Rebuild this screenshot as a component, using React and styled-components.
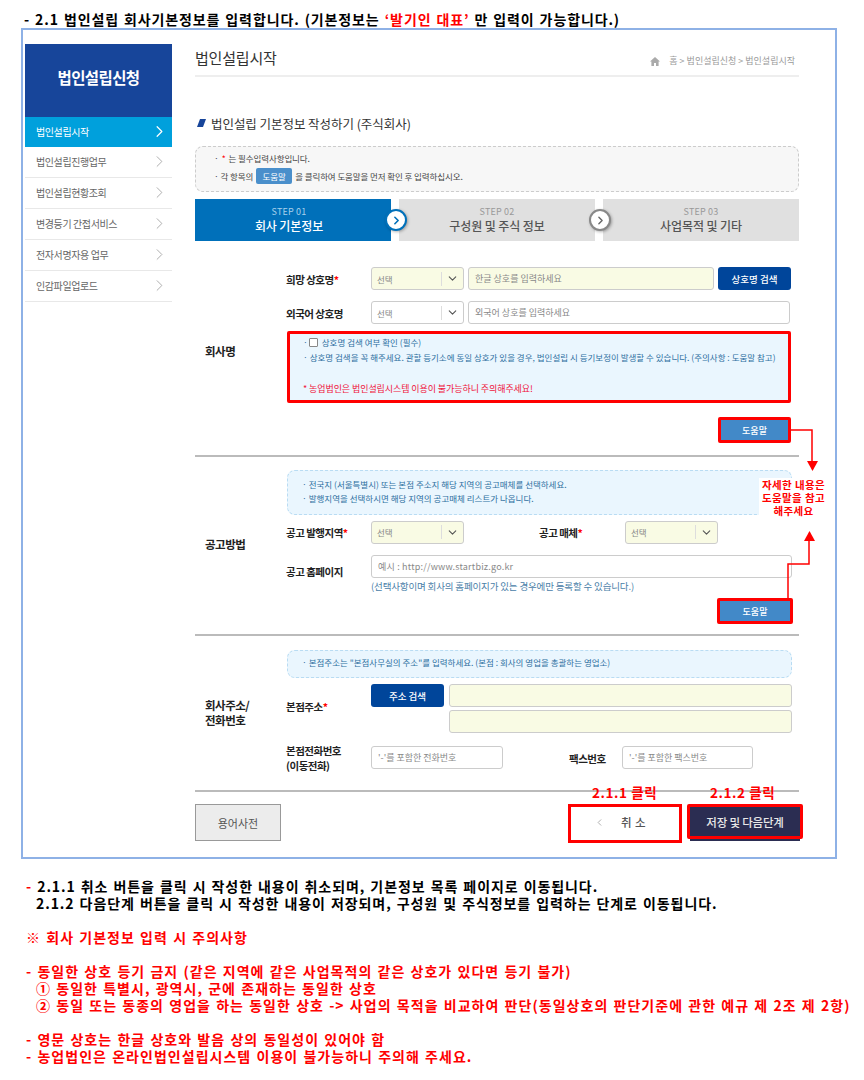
import styled, { createGlobalStyle } from 'styled-components'
import { ChevronRight, ChevronDown, ChevronLeft } from 'lucide-react'

const FONT = '"Noto Sans CJK KR", "Noto Sans", sans-serif'

const GlobalStyle = createGlobalStyle`
  html, body {
    margin: 0;
    background: #fff;
    font-family: ${FONT};
  }
  * { box-sizing: border-box; }
`

const Page = styled.div`
  position: relative;
  width: 864px;
  height: 1080px;
  overflow: hidden;
  background: #fff;
`

const Heading = styled.h1`
  margin: 0;
  height: 28px;
  padding: 11px 0 0 24px;
  font-size: 14px;
  line-height: 17px;
  font-weight: 700;
  color: #000;
  white-space: nowrap;
  letter-spacing: 0.88px;
  word-spacing: 1px;
`

const Red = styled.span`
  color: #f00;
`

const Card = styled.div`
  display: flex;
  gap: 23px;
  margin-left: 21px;
  width: 816px;
  height: 831px;
  padding: 14px 0 0 2px;
  border: 2px solid #8eb1e6;
`

// sidebar
const Side = styled.aside`
  width: 147px;
  flex: none;
`

const SideHead = styled.div`
  display: flex;
  align-items: center;
  justify-content: center;
  height: 73px;
  padding-bottom: 7px;
  background: #17459a;
  color: #fff;
  font-size: 15.5px;
  font-weight: 700;
  letter-spacing: -0.6px;
`

const SideItem = styled.div`
  display: flex;
  align-items: center;
  justify-content: space-between;
  height: ${(p) => (p.$active ? '30px' : '31px')};
  padding: 0 3px 1px 11px;
  font-size: 10px;
  letter-spacing: -0.4px;
  background: ${(p) => (p.$active ? '#00a0dc' : '#fff')};
  color: ${(p) => (p.$active ? '#fff' : '#666')};
  border-bottom: ${(p) => (p.$active ? 'none' : '1px solid #e8e8e8')};
  svg { color: ${(p) => (p.$active ? '#fff' : '#aaa')}; }
`

// main column
const Main = styled.main`
  width: 604px;
  flex: none;
`

const TitleBar = styled.div`
  display: flex;
  align-items: flex-start;
  justify-content: space-between;
  height: 33px;
  border-bottom: 2px solid #eee;
`

const PageTitle = styled.h2`
  margin: 0;
  font-size: 15px;
  line-height: 28px;
  font-weight: 400;
  color: #333;
  letter-spacing: -0.2px;
`

const Crumbs = styled.div`
  display: flex;
  align-items: center;
  gap: 3px;
  margin: 11px 4px 0 0;
  font-size: 9px;
  line-height: 12px;
  color: #999;
  svg { margin-right: 6px; }
`

const FormTitle = styled.h3`
  display: flex;
  align-items: center;
  gap: 5px;
  margin: 36px 0 0;
  height: 20px;
  padding-left: 2px;
  font-size: 12.5px;
  font-weight: 400;
  color: #333;
  letter-spacing: -0.05px;
`

const Notice = styled.div`
  margin-top: 13px;
  height: 46px;
  padding: 5px 0 0 18px;
  background: #f7f7f7;
  border: 1px dashed #ccc;
  border-radius: 8px;
  font-size: 8.5px;
  line-height: 12px;
  color: #444;
  letter-spacing: -0.1px;
`

const NoticeRow = styled.div`
  display: flex;
  align-items: center;
  gap: 3px;
  height: ${(p) => p.$h || 12}px;
`

const Pill = styled.span`
  display: inline-flex;
  align-items: center;
  justify-content: center;
  width: 36px;
  height: 16px;
  border-radius: 2px;
  background: #4a8fcb;
  color: #fff;
`

const Steps = styled.div`
  display: flex;
  gap: 8px;
  margin-top: 7px;
`

const Step = styled.div`
  position: relative;
  flex: none;
  width: 196px;
  height: 42px;
  display: flex;
  flex-direction: column;
  align-items: center;
  justify-content: center;
  padding-right: ${(p) => (p.$active ? '8px' : '0')};
  background: ${(p) => (p.$active ? '#0070ba' : '#e0e0e0')};
  color: ${(p) => (p.$active ? '#fff' : '#555')};
`

const StepNum = styled.div`
  font-size: 9px;
  line-height: 12px;
  letter-spacing: 0.2px;
  color: ${(p) => (p.$active ? '#a8d0ec' : '#999')};
`

const StepName = styled.div`
  font-size: 12px;
  line-height: 16px;
  font-weight: 500;
  letter-spacing: -0.1px;
`

const StepArrow = styled.span`
  position: absolute;
  top: 10px;
  right: -16px;
  z-index: 1;
  display: flex;
  align-items: center;
  justify-content: center;
  width: 22px;
  height: 22px;
  border-radius: 50%;
  background: #fff;
  border: 2px solid ${(p) => (p.$active ? '#0070ba' : '#888')};
  color: ${(p) => (p.$active ? '#0070ba' : '#666')};
  box-shadow: 1px 1px 3px rgba(0, 0, 0, 0.3);
`

// form sections
const Section = styled.section`
  display: flex;
  align-items: center;
  margin-top: ${(p) => p.$mt || 0}px;
  height: ${(p) => p.$h}px;
  border-bottom: 2px solid #bbb;
`

const SectionLabel = styled.div`
  flex: none;
  width: 92px;
  padding: ${(p) => p.$pt || 0}px 0 2px 10px;
  font-size: 11.5px;
  line-height: 15px;
  font-weight: 700;
  color: #222;
  letter-spacing: -0.5px;
`

const SectionBody = styled.div`
  align-self: flex-start;
  width: 504px;
  padding-top: ${(p) => p.$pt}px;
`

const Row = styled.div`
  display: flex;
  align-items: ${(p) => p.$align || 'center'};
  gap: 4px;
  height: ${(p) => p.$h || 23}px;
  margin-top: ${(p) => p.$mt || 0}px;
`

const FieldLabel = styled.label`
  flex: none;
  width: ${(p) => p.$w || 81}px;
  margin-left: ${(p) => p.$ml ?? -1}px;
  padding-top: ${(p) => p.$pt || 1}px;
  font-size: 10.5px;
  line-height: 15px;
  font-weight: 700;
  color: #222;
  letter-spacing: -0.5px;
  white-space: nowrap;
  em {
    font-style: normal;
    color: #f00;
  }
`

const Select = styled.div`
  flex: none;
  display: flex;
  align-items: center;
  width: 93px;
  height: 23px;
  padding-left: 5px;
  border: 1px solid #ccc;
  border-radius: 3px;
  background: ${(p) => (p.$req ? '#f9fbe4' : '#fff')};
  font-size: 8.5px;
  color: #888;
  span {
    flex: 1;
  }
  i {
    display: flex;
    align-items: center;
    justify-content: center;
    width: 22px;
    height: 14px;
    border-left: 1px solid #ddd;
    color: #555;
  }
`

const Field = styled.div`
  flex: ${(p) => (p.$w ? 'none' : '1')};
  width: ${(p) => (p.$w ? `${p.$w}px` : 'auto')};
  height: 23px;
  padding: 0 6px;
  margin-right: ${(p) => p.$mr || 0}px;
  display: flex;
  align-items: center;
  border: 1px solid #ccc;
  border-radius: 3px;
  background: ${(p) => (p.$req ? '#f9fbe4' : '#fff')};
  font-size: 9px;
  color: #888;
`

const UrlValue = styled.span`
  letter-spacing: 0.2px;
`

const NavyButton = styled.button`
  flex: none;
  width: ${(p) => p.$w || 73}px;
  height: 23px;
  padding: 0;
  border: none;
  border-radius: 3px;
  background: #00459a;
  color: #fff;
  font-family: inherit;
  font-size: 9.5px;
  font-weight: 500;
`

const InfoBox = styled.div`
  width: ${(p) => p.$w || 505}px;
  height: ${(p) => p.$h}px;
  margin-top: ${(p) => p.$mt || 0}px;
  padding: ${(p) => p.$p || '6px 0 0 14px'};
  background: #eaf6fe;
  border: 1px dashed #b9dcf3;
  border-radius: 8px;
  font-size: 8.5px;
  line-height: 14px;
  color: #2d6f9f;
  white-space: nowrap;
`

const MarkedBox = styled(InfoBox)`
  border: 3px solid #f00;
  border-radius: 2px;
  padding: 1px 0 0 13px;
  line-height: 15px;
`

const CheckLine = styled.div`
  display: flex;
  align-items: center;
  gap: 1px;
  height: 15px;
`

const CheckBox = styled.span`
  width: 9px;
  height: 9px;
  margin-right: 3px;
  border: 1px solid #888;
  border-radius: 1px;
  background: #fff;
`

const BoxWarning = styled.div`
  margin-top: 16px;
  font-size: 9px;
  letter-spacing: -0.08px;
  color: #f0143c;
`

const HelpRow = styled.div`
  display: flex;
  justify-content: flex-end;
  margin-top: ${(p) => p.$mt}px;
  width: ${(p) => p.$w || 504}px;
`

const HelpButton = styled.button`
  width: ${(p) => p.$w || 73}px;
  height: 26px;
  padding: 0;
  border: 3px solid #f00;
  border-radius: 2px;
  background: #4289c8;
  color: #fff;
  font-family: inherit;
  font-size: 9px;
  font-weight: 500;
`

const FieldNote = styled.div`
  margin: 2px 0 0 84px;
  font-size: 9.5px;
  line-height: 12px;
  letter-spacing: -0.15px;
  color: #4a80a8;
  white-space: nowrap;
`

const AddressFields = styled.div`
  flex: 1;
  display: flex;
  flex-direction: column;
  gap: 3px;
  margin: 0 -1px 0 1px;
`

const AddressField = styled(Field)`
  flex: none;
`

// bottom of the form
const Actions = styled.div`
  position: relative;
  display: flex;
  align-items: flex-start;
  justify-content: space-between;
  margin-top: 12px;
`

const GlossaryButton = styled.button`
  width: 86px;
  height: 37px;
  padding: 0;
  border: 1px solid #999;
  background: #ececec;
  color: #555;
  font-family: inherit;
  font-size: 11px;
`

const ActionGroup = styled.div`
  display: flex;
  gap: 5px;
  margin-right: -4px;
`

const ActionCell = styled.div`
  position: relative;
`

const ClickTag = styled.span`
  position: absolute;
  top: -21px;
  left: ${(p) => p.$left}px;
  font-size: 13.5px;
  line-height: 18px;
  font-weight: 700;
  color: #f00;
  letter-spacing: 0.6px;
  white-space: nowrap;
`

const CancelButton = styled.button`
  display: flex;
  align-items: center;
  justify-content: center;
  gap: 16px;
  width: 114px;
  height: 39px;
  padding: 0 10px 3px 0;
  border: 3px solid #f00;
  background: #fff;
  color: #555;
  font-family: inherit;
  font-size: 11.5px;
  font-weight: 500;
  letter-spacing: 0.4px;
`

const SaveButton = styled.button`
  width: 116px;
  height: 35px;
  padding: 0;
  border: 3px solid #f00;
  border-radius: 2px;
  background: #2b2d52;
  box-shadow: 0 5px 0 -3px #2b2d52;
  color: #e8e8e8;
  font-family: inherit;
  font-size: 11.5px;
  font-weight: 500;
  letter-spacing: -0.2px;
`

// annotation over the screenshot
const Overlay = styled.svg`
  position: absolute;
  inset: 0;
  pointer-events: none;
`

const Callout = styled.div`
  position: absolute;
  left: 759px;
  top: 478px;
  width: 69px;
  height: 38px;
  background: #fff;
  color: #f00;
  font-size: 10.5px;
  line-height: 13px;
  font-weight: 700;
  letter-spacing: 0.4px;
  text-align: center;
  white-space: nowrap;
`

// text under the screenshot
const Notes = styled.div`
  margin-top: 19px;
  padding-left: 26px;
  font-size: 14px;
  line-height: 17px;
  font-weight: 700;
  white-space: nowrap;
`

const Line = styled.div`
  color: ${(p) => (p.$black ? '#000' : '#f00')};
  padding-left: ${(p) => p.$indent || 0}px;
  margin-top: ${(p) => p.$gap || 0}px;
  letter-spacing: ${(p) => (p.$black ? '0.92px' : '1.03px')};
  word-spacing: 1px;
`

const sideItems = ['법인설립진행업무', '법인설립현황조회', '변경등기 간접서비스', '전자서명자용 업무', '인감파일업로드']

const Chevron = () => <ChevronDown size={13} strokeWidth={2} />

const App = () => {
  return (
    <Page>
      <GlobalStyle />
      <Heading>
        - 2.1 법인설립 회사기본정보를 입력합니다. (기본정보는 <Red>‘발기인 대표’</Red> 만 입력이 가능합니다.)
      </Heading>
      <Card>
        <Side>
          <SideHead>법인설립신청</SideHead>
          <SideItem $active>
            법인설립시작
            <ChevronRight size={19} strokeWidth={1.5} />
          </SideItem>
          {sideItems.map((name) => (
            <SideItem key={name}>
              {name}
              <ChevronRight size={19} strokeWidth={1.2} />
            </SideItem>
          ))}
        </Side>
        <Main>
          <TitleBar>
            <PageTitle>법인설립시작</PageTitle>
            <Crumbs>
              <svg width="10" height="9" viewBox="0 0 10 9">
                <path d="M5 0 L10 4.6 H8.6 V9 H6 V6 H4 V9 H1.4 V4.6 H0 Z" fill="#aaa" />
              </svg>
              홈 &gt; 법인설립신청 &gt; 법인설립시작
            </Crumbs>
          </TitleBar>
          <FormTitle>
            <svg width="9" height="8" viewBox="0 0 9 8">
              <path d="M3 0 H9 L6 8 H0 Z" fill="#17459a" />
            </svg>
            법인설립 기본정보 작성하기 (주식회사)
          </FormTitle>
          <Notice>
            <NoticeRow>
              · <Red>*</Red>는 필수입력사항입니다.
            </NoticeRow>
            <NoticeRow $h={24}>
              · 각 항목의 <Pill>도움말</Pill> 을 클릭하여 도움말을 먼저 확인 후 입력하십시오.
            </NoticeRow>
          </Notice>
          <Steps>
            <Step $active>
              <StepNum $active>STEP 01</StepNum>
              <StepName>회사 기본정보</StepName>
              <StepArrow $active>
                <ChevronRight size={13} strokeWidth={3} />
              </StepArrow>
            </Step>
            <Step>
              <StepNum>STEP 02</StepNum>
              <StepName>구성원 및 주식 정보</StepName>
              <StepArrow>
                <ChevronRight size={13} strokeWidth={2.5} />
              </StepArrow>
            </Step>
            <Step>
              <StepNum>STEP 03</StepNum>
              <StepName>사업목적 및 기타</StepName>
            </Step>
          </Steps>

          <Section $mt={9} $h={207}>
            <SectionLabel>회사명</SectionLabel>
            <SectionBody $pt={17}>
              <Row>
                <FieldLabel>
                  희망 상호명<em>*</em>
                </FieldLabel>
                <Select $req>
                  <span>선택</span>
                  <i><Chevron /></i>
                </Select>
                <Field $req>한글 상호를 입력하세요</Field>
                <NavyButton>상호명 검색</NavyButton>
              </Row>
              <Row $mt={11}>
                <FieldLabel>외국어 상호명</FieldLabel>
                <Select>
                  <span>선택</span>
                  <i><Chevron /></i>
                </Select>
                <Field $mr={1}>외국어 상호를 입력하세요</Field>
              </Row>
              <MarkedBox $h={72} $mt={7} $w={504}>
                <CheckLine>
                  · <CheckBox /> 상호명 검색 여부 확인 (필수)
                </CheckLine>
                <div>· 상호명 검색을 꼭 해주세요. 관할 등기소에 동일 상호가 있을 경우, 법인설립 시 등기보정이 발생할 수 있습니다. (주의사항 : 도움말 참고)</div>
                <BoxWarning>* 농업법인은 법인설립시스템 이용이 불가능하니 주의해주세요!</BoxWarning>
              </MarkedBox>
              <HelpRow $mt={14}>
                <HelpButton>도움말</HelpButton>
              </HelpRow>
            </SectionBody>
          </Section>

          <Section $h={179}>
            <SectionLabel>공고방법</SectionLabel>
            <SectionBody $pt={13}>
              <InfoBox $h={45}>
                <div>· 전국지 (서울특별시) 또는 본점 주소지 해당 지역의 공고매체를 선택하세요.</div>
                <div>· 발행지역을 선택하시면 해당 지역의 공고매체 리스트가 나옵니다.</div>
              </InfoBox>
              <Row $mt={6} $h={22}>
                <FieldLabel>
                  공고 발행지역<em>*</em>
                </FieldLabel>
                <Select $req>
                  <span>선택</span>
                  <i><Chevron /></i>
                </Select>
                <FieldLabel $w={82} $ml={71}>
                  공고 매체<em>*</em>
                </FieldLabel>
                <Select $req>
                  <span>선택</span>
                  <i><Chevron /></i>
                </Select>
              </Row>
              <Row $mt={12}>
                <FieldLabel $pt={10}>공고 홈페이지</FieldLabel>
                <Field $mr={-1}><UrlValue>예시 : http://www.startbiz.go.kr</UrlValue></Field>
              </Row>
              <FieldNote>(선택사항이며 회사의 홈페이지가 있는 경우에만 등록할 수 있습니다.)</FieldNote>
              <HelpRow $mt={6} $w={506}>
                <HelpButton $w={76}>도움말</HelpButton>
              </HelpRow>
            </SectionBody>
          </Section>

          <Section $h={156}>
            <SectionLabel $pt={2}>
              회사주소/
              <br />
              전화번호
            </SectionLabel>
            <SectionBody $pt={14}>
              <InfoBox $h={28} $p="4px 0 0 14px">
                · 본점주소는 "본점사무실의 주소"를 입력하세요. (본점 : 회사의 영업을 총괄하는 영업소)
              </InfoBox>
              <Row $mt={6} $h={49} $align="flex-start">
                <FieldLabel $pt={15}>
                  본점주소<em>*</em>
                </FieldLabel>
                <NavyButton>주소 검색</NavyButton>
                <AddressFields>
                  <AddressField $req />
                  <AddressField $req />
                </AddressFields>
              </Row>
              <Row $mt={13}>
                <FieldLabel>
                  본점전화번호
                  <br />
                  (이동전화)
                </FieldLabel>
                <Field $w={132}>'-'를 포함한 전화번호</Field>
                <FieldLabel $w={49} $ml={62}>팩스번호</FieldLabel>
                <Field $w={131}>'-'를 포함한 팩스번호</Field>
              </Row>
            </SectionBody>
          </Section>

          <Actions>
            <GlossaryButton>용어사전</GlossaryButton>
            <ActionGroup>
              <ActionCell>
                <ClickTag $left={24}>2.1.1 클릭</ClickTag>
                <CancelButton>
                  <ChevronLeft size={11} strokeWidth={2} color="#aaa" />
                  취 소
                </CancelButton>
              </ActionCell>
              <ActionCell>
                <ClickTag $left={23}>2.1.2 클릭</ClickTag>
                <SaveButton>저장 및 다음단계</SaveButton>
              </ActionCell>
            </ActionGroup>
          </Actions>
        </Main>
      </Card>

      <Notes>
        <Line $black><Red>- </Red>2.1.1 취소 버튼을 클릭 시 작성한 내용이 취소되며, 기본정보 목록 페이지로 이동됩니다.</Line>
        <Line $black $indent={10}>2.1.2 다음단계 버튼을 클릭 시 작성한 내용이 저장되며, 구성원 및 주식정보를 입력하는 단계로 이동됩니다.</Line>
        <Line $gap={17}>※ 회사 기본정보 입력 시 주의사항</Line>
        <Line $gap={17}>- 동일한 상호 등기 금지 (같은 지역에 같은 사업목적의 같은 상호가 있다면 등기 불가)</Line>
        <Line $indent={10}>① 동일한 특별시, 광역시, 군에 존재하는 동일한 상호</Line>
        <Line $indent={10}>② 동일 또는 동종의 영업을 하는 동일한 상호 -&gt; 사업의 목적을 비교하여 판단(동일상호의 판단기준에 관한 예규 제 2조 제 2항)</Line>
        <Line $gap={17}>- 영문 상호는 한글 상호와 발음 상의 동일성이 있어야 함</Line>
        <Line>- 농업법인은 온라인법인설립시스템 이용이 불가능하니 주의해 주세요.</Line>
      </Notes>

      <Overlay width="864" height="1080" viewBox="0 0 864 1080">
        <path d="M791 430 H812 V464" fill="none" stroke="#f00" strokeWidth="1.5" />
        <path d="M807 461 H818 L812.5 471 Z" fill="#f00" />
        <path d="M788 598 V564 H809 V538" fill="none" stroke="#f00" strokeWidth="1.5" />
        <path d="M804 541 H815 L809.5 531 Z" fill="#f00" />
      </Overlay>
      <Callout>
        자세한 내용은
        <br />
        도움말을 참고
        <br />
        해주세요
      </Callout>
    </Page>
  )
}

export default App
